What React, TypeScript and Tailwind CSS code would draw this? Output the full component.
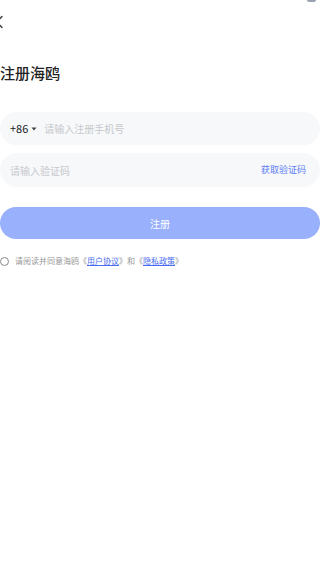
import React, { useState } from 'react';

const font = { fontFamily: '"Noto Sans CJK SC", "Noto Sans", sans-serif' };

export default function App() {
  const [agreed, setAgreed] = useState(false);

  return (
    <div className="relative w-[320px] h-[577px] bg-white overflow-hidden font-['Noto_Sans_CJK_SC',sans-serif]" style={font}>
      {/* status bar remnants */}
      <div className="absolute top-0 left-[307px] w-[9px] h-[2px] bg-gray-400 rounded-b-sm" />

      {/* back */}
      <div className="h-[40px] flex items-center pt-[4px]">
        <svg width="12" height="14" viewBox="0 0 12 14" className="-ml-[6px]">
          <path d="M8 1.5 L2.5 7 L8 12.5" fill="none" stroke="#333" strokeWidth="1.3" strokeLinecap="round" />
        </svg>
      </div>

      {/* title */}
      <h1 className="mt-[24px] text-[15px] leading-[18px] font-medium text-[#222]">注册海鸥</h1>

      {/* phone */}
      <div className="mt-[30px] h-[33px] rounded-full bg-[#f7f8fa] flex items-center pl-[10px] pr-3">
        <span className="text-[11px] text-[#222]">+86</span>
        <svg width="6" height="4" viewBox="0 0 6 4" className="ml-[3px]">
          <path d="M0.5 0.5 L5.5 0.5 L3 3.5 Z" fill="#444" />
        </svg>
        <input
          className="ml-[7px] flex-1 bg-transparent outline-none text-[10px] text-[#222] placeholder:text-[#c6c8cc]"
          placeholder="请输入注册手机号"
        />
      </div>

      {/* code */}
      <div className="mt-[8px] h-[34px] rounded-full bg-[#f7f8fa] flex items-center pl-[10px] pr-[14px]">
        <input
          className="flex-1 min-w-0 bg-transparent outline-none text-[10px] text-[#222] placeholder:text-[#c6c8cc]"
          placeholder="请输入验证码"
        />
        <button className="text-[9px] text-[#5b7cf5]">获取验证码</button>
      </div>

      {/* submit */}
      <button className="mt-[20px] w-full h-[32px] rounded-full bg-[#99b0fd] text-white text-[10px]">注册</button>

      {/* agreement */}
      <div className="mt-[17px] flex items-center">
        <button
          onClick={() => setAgreed(!agreed)}
          className={`w-[9px] h-[9px] rounded-full border ${agreed ? 'border-[#5b7cf5] bg-[#5b7cf5]' : 'border-[#888]'}`}
        />
        <span className="ml-[6px] text-[8px] leading-[10px] text-[#999]">
          请阅读并同意海鸥《<span className="text-[#4a6cf0] underline">用户协议</span>》和《<span className="text-[#4a6cf0] underline">隐私政策</span>》
        </span>
      </div>
    </div>
  );
}
